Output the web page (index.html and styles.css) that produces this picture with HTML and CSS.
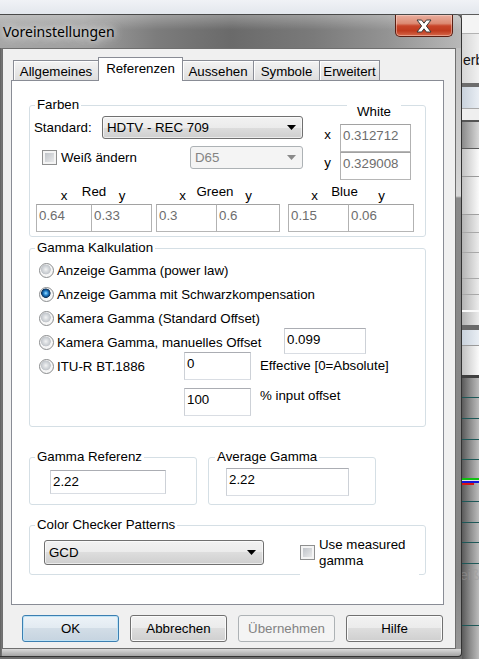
FILE: index.html
```html
<!DOCTYPE html>
<html lang="de">
<head>
<meta charset="utf-8">
<title>Voreinstellungen</title>
<link rel="stylesheet" href="styles.css">
</head>
<body>
<div class="page">
  <div class="topstrip"></div>
  <div class="main">
    <div class="window">
      <div class="titlebar">
        <span class="title">Voreinstellungen</span>
        <div class="close">
          <svg width="16" height="14" viewBox="0 0 16 14"><path d="M1 1H5.6L8 4.2L10.4 1H15L10.4 7L15 13H10.4L8 9.8L5.6 13H1L5.6 7Z" fill="#fff" stroke="#3a3a3a" stroke-width="1" stroke-linejoin="round"/></svg>
        </div>
      </div>
      <div class="client">
        <div class="tabs">
          <div class="tab t1">Allgemeines</div>
          <div class="tab t2 sel">Referenzen</div>
          <div class="tab t3">Aussehen</div>
          <div class="tab t4">Symbole</div>
          <div class="tab t5">Erweitert</div>
        </div>
        <div class="panel">
          <div class="group farben">
            <div class="legend">Farben</div>
            <div class="f-top">
              <div class="f-left">
                <div class="f-row1">
                  <span class="std-label">Standard:</span>
                  <div class="combo std"><span>HDTV - REC 709</span><svg class="arr" width="9" height="5" viewBox="0 0 9 5"><path d="M0 0H9L4.5 5Z"/></svg></div>
                </div>
                <div class="f-row2">
                  <div class="check wc"><span class="cb"></span><span>Weiß ändern</span></div>
                  <div class="combo d65 disabled"><span>D65</span><svg class="arr" width="9" height="5" viewBox="0 0 9 5"><path d="M0 0H9L4.5 5Z"/></svg></div>
                </div>
              </div>
              <div class="f-right">
                <div class="white-label">White</div>
                <div class="xy-row"><span class="xy">x</span><div class="tb ro w-white">0.312712</div></div>
                <div class="xy-row"><span class="xy">y</span><div class="tb ro w-white">0.329008</div></div>
              </div>
            </div>
            <div class="f-colors">
              <div class="cgroup red">
                <span class="cname">Red</span><span class="cx">x</span><span class="cy">y</span>
                <div class="tb ro">0.64</div><div class="tb ro second">0.33</div>
              </div>
              <div class="cgroup green">
                <span class="cname">Green</span><span class="cx">x</span><span class="cy">y</span>
                <div class="tb ro">0.3</div><div class="tb ro second">0.6</div>
              </div>
              <div class="cgroup blue">
                <span class="cname">Blue</span><span class="cx">x</span><span class="cy">y</span>
                <div class="tb ro">0.15</div><div class="tb ro second">0.06</div>
              </div>
            </div>
          </div>

          <div class="group gk">
            <div class="legend">Gamma Kalkulation</div>
            <div class="radios">
              <div class="rrow"><div class="ropt"><span class="radio"></span><span>Anzeige Gamma (power law)</span></div></div>
              <div class="rrow"><div class="ropt"><span class="radio on"></span><span>Anzeige Gamma mit Schwarzkompensation</span></div></div>
              <div class="rrow"><div class="ropt"><span class="radio"></span><span>Kamera Gamma (Standard Offset)</span></div></div>
              <div class="rrow"><div class="ropt w245"><span class="radio"></span><span>Kamera Gamma, manuelles Offset</span></div><div class="tb tb-off">0.099</div></div>
              <div class="rrow"><div class="ropt w145"><span class="radio"></span><span>ITU-R BT.1886</span></div><div class="tb tb-small">0</div><span class="after">Effective [0=Absolute]</span></div>
              <div class="rrow last"><div class="tb tb-small">100</div><span class="after">% input offset</span></div>
            </div>
          </div>

          <div class="pair">
            <div class="group gref">
              <div class="legend">Gamma Referenz</div>
              <div class="tb tb-ref">2.22</div>
            </div>
            <div class="group gavg">
              <div class="legend">Average Gamma</div>
              <div class="tb tb-avg">2.22</div>
            </div>
          </div>

          <div class="group ccp">
            <div class="legend">Color Checker Patterns</div>
            <div class="ccp-body">
              <div class="combo gcd"><span>GCD</span><svg class="arr" width="9" height="5" viewBox="0 0 9 5"><path d="M0 0H9L4.5 5Z"/></svg></div>
              <div class="check um"><span class="cb"></span><span class="um-text">Use measured<br>gamma</span></div>
            </div>
          </div>
        </div>
        <div class="buttons">
          <div class="btn def">OK</div>
          <div class="btn">Abbrechen</div>
          <div class="btn dis">Übernehmen</div>
          <div class="btn">Hilfe</div>
        </div>
      </div>
    </div>
    <svg class="bgapp" width="17" height="645" viewBox="0 0 17 645">
      <defs>
        <linearGradient id="g1" x1="0" x2="1" y1="0" y2="0"><stop offset="0" stop-color="#d6d6d6"/><stop offset="1" stop-color="#f0f0f0"/></linearGradient>
        <linearGradient id="g2" x1="0" x2="1" y1="0" y2="0"><stop offset="0" stop-color="#8a8a8a"/><stop offset="1" stop-color="#d8d8d8"/></linearGradient>
        <linearGradient id="g3" x1="0" x2="1" y1="0" y2="0"><stop offset="0" stop-color="#c2c2c2"/><stop offset="1" stop-color="#fafafa"/></linearGradient>
        <linearGradient id="g4" x1="0" x2="1" y1="0" y2="0"><stop offset="0" stop-color="#b4b4b4"/><stop offset="1" stop-color="#ececec"/></linearGradient>
        <linearGradient id="g5" x1="0" x2="1" y1="0" y2="0"><stop offset="0" stop-color="#5a5a5a"/><stop offset="0.5" stop-color="#8e8e8e"/><stop offset="1" stop-color="#bcbcbc"/></linearGradient>
        <linearGradient id="gb" x1="0" x2="1" y1="0" y2="0"><stop offset="0" stop-color="#c9d2dc"/><stop offset="1" stop-color="#e9eef4"/></linearGradient>
      </defs>
      <rect x="0" y="0" width="17" height="1" fill="#5c5c5c"/>
      <rect x="0" y="1" width="17" height="18" fill="#f4f4f4"/>
      <rect x="0" y="19" width="17" height="1" fill="#b2b2b2"/>
      <rect x="0" y="20" width="17" height="49" fill="url(#g1)"/>
      <text x="1" y="51" font-family="Liberation Sans, Arial, sans-serif" font-size="14" fill="#111">erb</text>
      <rect x="0" y="69" width="17" height="4" fill="#6d6d6d"/>
      <rect x="0" y="73" width="17" height="21" fill="url(#gb)"/>
      <rect x="0" y="94" width="17" height="1" fill="#a8a8a8"/>
      <rect x="0" y="95" width="17" height="11" fill="#efefef"/>
      <rect x="0" y="106" width="17" height="2" fill="#555"/>
      <rect x="0" y="108" width="17" height="26" fill="url(#g2)"/>
      <rect x="0" y="134" width="17" height="1" fill="#5a5a5a"/>
      <rect x="0" y="135" width="17" height="27" fill="url(#g3)"/>
      <rect x="0" y="162" width="17" height="1" fill="#9a9a9a"/>
      <rect x="0" y="163" width="17" height="37" fill="url(#g3)"/>
      <rect x="0" y="200" width="17" height="1" fill="#a0a0a0"/>
      <rect x="0" y="201" width="17" height="17" fill="url(#g4)"/>
      <rect x="0" y="218" width="17" height="1" fill="#a8a8a8"/>
      <rect x="0" y="219" width="17" height="19" fill="url(#g4)"/>
      <rect x="0" y="238" width="17" height="1" fill="#a8a8a8"/>
      <rect x="0" y="239" width="17" height="25" fill="url(#g4)"/>
      <rect x="0" y="264" width="17" height="1" fill="#a8a8a8"/>
      <rect x="0" y="265" width="17" height="15" fill="url(#g4)"/>
      <rect x="0" y="280" width="17" height="1" fill="#a8a8a8"/>
      <rect x="0" y="281" width="17" height="15" fill="url(#g4)"/>
      <rect x="0" y="296" width="17" height="2" fill="#fafafa"/>
      <rect x="0" y="298" width="17" height="13" fill="url(#g4)"/>
      <rect x="0" y="311" width="17" height="5" fill="#6a6a6a"/>
      <rect x="0" y="316" width="17" height="15" fill="url(#gb)"/>
      <rect x="0" y="331" width="17" height="1" fill="#9a9a9a"/>
      <rect x="0" y="332" width="17" height="29" fill="url(#g3)"/>
      <rect x="0" y="361" width="17" height="3" fill="#404040"/>
      <rect x="0" y="364" width="17" height="281" fill="url(#g5)"/>
      <rect x="0" y="383" width="17" height="1" fill="#1e5858"/>
      <rect x="0" y="404" width="17" height="1" fill="#1e5858"/>
      <rect x="0" y="425" width="17" height="1" fill="#1e5858"/>
      <rect x="0" y="445" width="17" height="1" fill="#1e5858"/>
      <rect x="0" y="464" width="17" height="2" fill="#10c010"/>
      <rect x="0" y="466" width="17" height="1" fill="#e8e8e8"/>
      <rect x="0" y="467" width="17" height="2" fill="#1414d8"/>
      <rect x="0" y="469" width="12" height="2" fill="#d81414"/>
      <rect x="0" y="487" width="17" height="1" fill="#1e5858"/>
      <rect x="0" y="508" width="17" height="1" fill="#1e5858"/>
      <rect x="0" y="528" width="17" height="1" fill="#1e5858"/>
      <rect x="0" y="549" width="17" height="1" fill="#1e5858"/>
      <text x="-2" y="566" font-family="Liberation Sans, Arial, sans-serif" font-size="14" fill="#9a9a9a" opacity="0.5">eiß</text>
      <rect x="0" y="611" width="17" height="1" fill="#1e5858"/>
    </svg>
  </div>
</div>
</body>
</html>
```
FILE: styles.css
```css
* { box-sizing: border-box; }
html, body { margin: 0; padding: 0; }
body {
  width: 479px; height: 659px; overflow: hidden;
  background: #6e6e6e;
  font-family: "Liberation Sans", Arial, sans-serif;
  font-size: 13.3px; color: #000;
}
.page { display: flex; flex-direction: column; width: 479px; height: 659px; }
.topstrip { flex: none; height: 14px; background: linear-gradient(#f0f2f6, #e3e7ed); }
.main { display: flex; height: 645px; background: #6e6e6e; }
.bgapp { display: block; flex: none; }

/* window frame */
.window {
  flex: none; width: 462px; height: 643px;
  display: flex; flex-direction: column;
  padding: 0 5px 0 2px;
  border-top: 1px solid #4a4a4a; border-right: 1px solid #333; border-bottom: 1px solid #333;
  border-radius: 0 6px 4px 0; overflow: hidden;
  background:
    linear-gradient(90deg, #5f5f5f 0, #7a7a7a 2px, rgba(0,0,0,0) 2px),
    linear-gradient(180deg, rgba(0,0,0,0) 634px, #dadada 634px, #a4a4a4 641px),
    linear-gradient(180deg, #bdbdbd 0, #d0d0d0 150px, #d8d8d8 181px, #8a8a8a 183px, #848484 560px, #9a9a9a 641px);
}
.titlebar {
  flex: none; height: 33px;
  margin: 0 -5px 0 -2px; padding: 0 8px 0 3px;
  display: flex; justify-content: space-between; align-items: flex-start;
  background:
    linear-gradient(180deg, rgba(255,255,255,.28) 0, rgba(255,255,255,0) 45%),
    linear-gradient(90deg, #a6a6a6 0, #a0a0a0 18%, #7c7c7c 34%, #6a6a6a 50%, #7a7a7a 68%, #939393 84%, #b8b8b8 100%);
}
.title {
  margin-top: 8px;
  font-family: "Noto Sans", "Liberation Sans", sans-serif;
  font-size: 14px; line-height: 18px; color: #000;
  text-shadow: 0 0 6px rgba(255,255,255,.9), 0 0 12px rgba(255,255,255,.7), 0 0 18px rgba(255,255,255,.5);
}
.close {
  width: 58px; height: 22px;
  display: flex; align-items: center; justify-content: center;
  border: 1px solid #5a1e12; border-top: none; border-radius: 0 0 5px 5px;
  background: linear-gradient(#e9ae9f 0, #dc8a73 40%, #c8452a 52%, #bf3a1e 75%, #d66a4c 100%);
  box-shadow: inset 0 0 0 1px rgba(255,225,215,.45);
}
.close svg { display: block; }

/* client area */
.client {
  flex: none; width: 454px; height: 601px;
  border: 1px solid #6f6f6f; background: #f0f0f0;
  padding: 8px 11px 0 8px;
  display: flex; flex-direction: column;
}
.tabs {
  flex: none; height: 23px; padding-left: 2px;
  display: flex; align-items: flex-end;
  position: relative; z-index: 1;
}
.tab {
  height: 20px; margin-left: -1px;
  border: 1px solid #898c95; border-bottom: none;
  display: flex; align-items: center; justify-content: center;
  background: linear-gradient(#f3f3f3, #dedede);
  box-shadow: inset 1px 1px 0 #fdfdfd;
  padding-top: 1px; white-space: nowrap;
}
.tab.t1 { margin-left: 0; width: 86px; }
.tab.t2 { width: 85px; }
.tab.t3 { width: 72px; }
.tab.t4 { width: 67px; }
.tab.t5 { width: 61px; }
.tab.sel { height: 24px; margin-bottom: -1px; background: #fff; box-shadow: none; padding-top: 0; padding-bottom: 2px; }

.panel {
  flex: none; width: 433px; height: 525px;
  border: 1px solid #898c95; background: #fff;
  padding: 0 17px;
  display: flex; flex-direction: column;
}

/* group boxes */
.group { flex: none; border: 1px solid #d5dfe5; border-radius: 3px; }
.legend {
  display: table; margin: -9px 0 -7px 5px; padding: 0 2px;
  background: #fff; line-height: 16px;
}
.farben { margin-top: 24px; height: 132px; }
.gk { margin-top: 11px; height: 179px; }
.pair { flex: none; display: flex; margin-top: 30px; height: 48px; }
.gref { width: 168px; height: 48px; }
.gavg { width: 168px; height: 48px; margin-left: 11px; }
.gavg .legend { margin-left: 6px; }
.ccp { margin-top: 20px; height: 50px; }

/* textboxes */
.tb {
  height: 28px; background: #fff;
  border: 1px solid; border-color: #abadb3 #cdd1d7 #d9dde3 #cdd1d7;
  padding: 3px 2px 0; line-height: 15px; white-space: nowrap; overflow: hidden;
}
.tb.ro { color: #6d6d6d; border-color: #a2a2a2 #b2b2b2 #b6b6b6 #b2b2b2; }

/* combos */
.combo {
  display: flex; align-items: center; justify-content: space-between;
  height: 23px; padding: 0 6px 0 4px;
  border: 1px solid #707070; border-radius: 3px;
  background: linear-gradient(#f2f2f2 0, #ebebeb 50%, #dddddd 50%, #cfcfcf 100%);
  box-shadow: inset 0 0 0 1px rgba(255,255,255,.6);
}
.combo .arr { display: block; fill: #000; }
.combo.disabled {
  border-color: #adb2b5; background: #f4f4f4; color: #838383; box-shadow: none;
}
.combo.disabled .arr { fill: #8a8a8a; }

/* checkbox */
.check { display: flex; align-items: center; }
.cb {
  flex: none; width: 15px; height: 15px; margin-right: 4px;
  border: 1px solid #8e8f8f;
  background: linear-gradient(135deg, #b6bbc1, #f2f2f2);
  box-shadow: inset 0 0 0 2px #f4f4f4;
}

/* Farben */
.f-top { display: flex; height: 74px; }
.f-left { width: 285px; }
.f-row1 { margin-top: 10px; height: 23px; display: flex; align-items: center; }
.std-label { margin-left: 4px; width: 68px; }
.combo.std { width: 201px; }
.f-row2 { margin-top: 7px; height: 23px; display: flex; align-items: center; }
.check.wc { margin-left: 12px; width: 148px; }
.combo.d65 { width: 113px; }
.f-right { width: 96px; }
.white-label {
  margin: -2px 0 0 32px; width: 54px; line-height: 16px;
  text-align: center; background: #fff;
}
.xy-row { display: flex; align-items: flex-start; }
.white-label + .xy-row { margin-top: 4px; }
.xy { width: 25px; text-align: center; line-height: 15px; padding-top: 3px; }
.w-white { width: 71px; }

.f-colors { display: flex; margin-top: 4px; }
.cgroup { display: grid; grid-template-rows: 20px 28px; }
.cgroup.red { margin-left: 6px; grid-template-columns: 56px 60px; }
.cgroup.green { margin-left: 4px; grid-template-columns: 61px 63px; }
.cgroup.blue { margin-left: 8px; grid-template-columns: 61px 65px; }
.cname { grid-row: 1; grid-column: 1 / 3; justify-self: center; align-self: start; line-height: 16px; }
.cx { grid-row: 1; grid-column: 1; justify-self: center; align-self: end; line-height: 16px; }
.cy { grid-row: 1; grid-column: 2; justify-self: center; align-self: end; line-height: 16px; }
.green .cname { margin-right: 6px; }
.blue .cname { margin-right: 13px; }
.green .cx, .blue .cx { margin-right: 8px; }
.cgroup .tb { grid-row: 2; }
.cgroup .tb.second { margin-left: -1px; }

/* Gamma Kalkulation */
.radios { padding: 9px 0 0 9px; }
.rrow { height: 24px; display: flex; align-items: center; white-space: nowrap; }
.ropt { display: flex; align-items: center; flex: none; }
.ropt.w245 { width: 245px; }
.ropt.w145 { width: 145px; }
.radio {
  flex: none; width: 15px; height: 15px; margin-right: 3px; border-radius: 50%;
  border: 1px solid #8a8c8e;
  background: radial-gradient(circle at 45% 42%, #f4f4f4 0, #dcdfe2 2px, #c2c6cb 4.6px, #f5f5f5 5.2px, #fbfbfb 100%);
}
.radio.on {
  background: radial-gradient(circle at 45% 40%, #a6e0ff 0, #3d9be0 1.6px, #0f5a9e 3.2px, #17365a 4.4px, #f5f5f5 5px, #fbfbfb 100%);
}
.tb-off { width: 82px; height: 26px; margin-top: -3px; color: #000; }
.tb-small { width: 67px; height: 28px; flex: none; }
.after { margin-left: 9px; line-height: 16px; }
.rrow.last { margin-top: 10px; height: 28px; padding-left: 145px; align-items: flex-start; }

/* pair */
.tb-ref { margin: 12px 0 0 20px; width: 116px; height: 24px; }
.tb-avg { margin: 10px 0 0 17px; width: 123px; height: 28px; }

/* Color Checker */
.ccp-body { display: flex; align-items: flex-start; }
.combo.gcd { margin: 14px 0 0 14px; width: 220px; height: 25px; padding-right: 7px; }
.check.um {
  margin: 11px 0 0 36px; width: 119px; height: 40px;
  align-items: flex-start; background: #fff;
}
.check.um .cb { margin-top: 8px; }
.um-text { line-height: 16px; }

/* buttons */
.buttons { flex: none; display: flex; gap: 11px; margin-top: 10px; padding-left: 11px; }
.btn {
  width: 97px; height: 27px;
  display: flex; align-items: center; justify-content: center;
  border: 1px solid #707070; border-radius: 3px;
  background: linear-gradient(#f2f2f2 0, #ebebeb 50%, #dddddd 50%, #cfcfcf 100%);
  box-shadow: inset 0 0 0 1px #fbfbfb;
}
.btn.def {
  border-color: #3c7fb1;
  background: linear-gradient(#edf3f8 0, #e2eaf1 50%, #d2dde7 50%, #c6d4e0 100%);
  box-shadow: inset 0 0 0 1px #bfe3f6;
}
.btn.dis { border-color: #adb2b5; background: #f4f4f4; color: #838383; box-shadow: none; }
```
